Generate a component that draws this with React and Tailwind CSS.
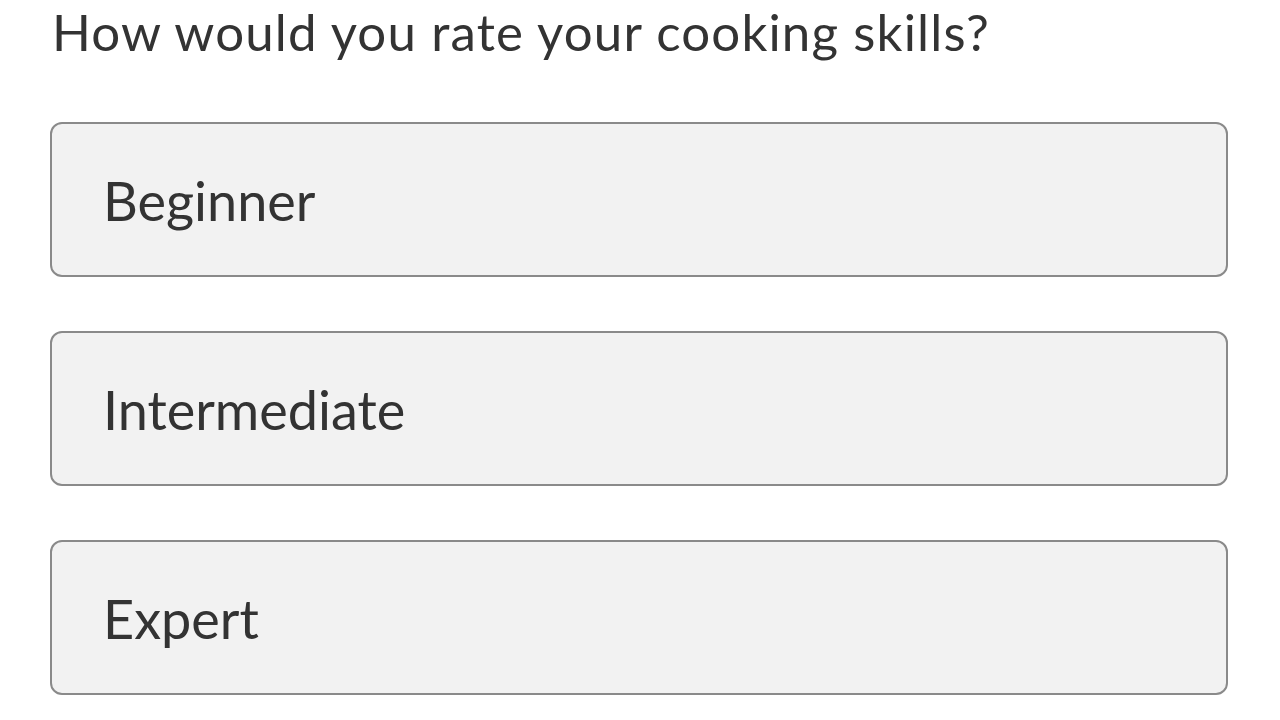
import React from 'react';

const options = ['Beginner', 'Intermediate', 'Expert'];

export default function App() {
  return (
    <div className="w-[1280px] h-[720px] bg-white overflow-hidden pl-[50px] pr-[52px] text-[#333333]" style={{ fontFamily: 'Lato, "Noto Sans", sans-serif' }}>
      <h1 className="pt-[2px] pl-[2px] text-[51px] leading-[60px] font-normal tracking-[1.15px]">
        How would you rate your cooking skills?
      </h1>
      <div className="mt-[60px] flex flex-col gap-[54px]">
        {options.map((opt) => (
          <div
            key={opt}
            className="h-[155px] flex items-center pl-[51px] pt-[2px] bg-[#f2f2f2] border-2 border-[#8a8a8a] rounded-[12px] text-[54px] font-normal"
          >
            {opt}
          </div>
        ))}
      </div>
    </div>
  );
}
